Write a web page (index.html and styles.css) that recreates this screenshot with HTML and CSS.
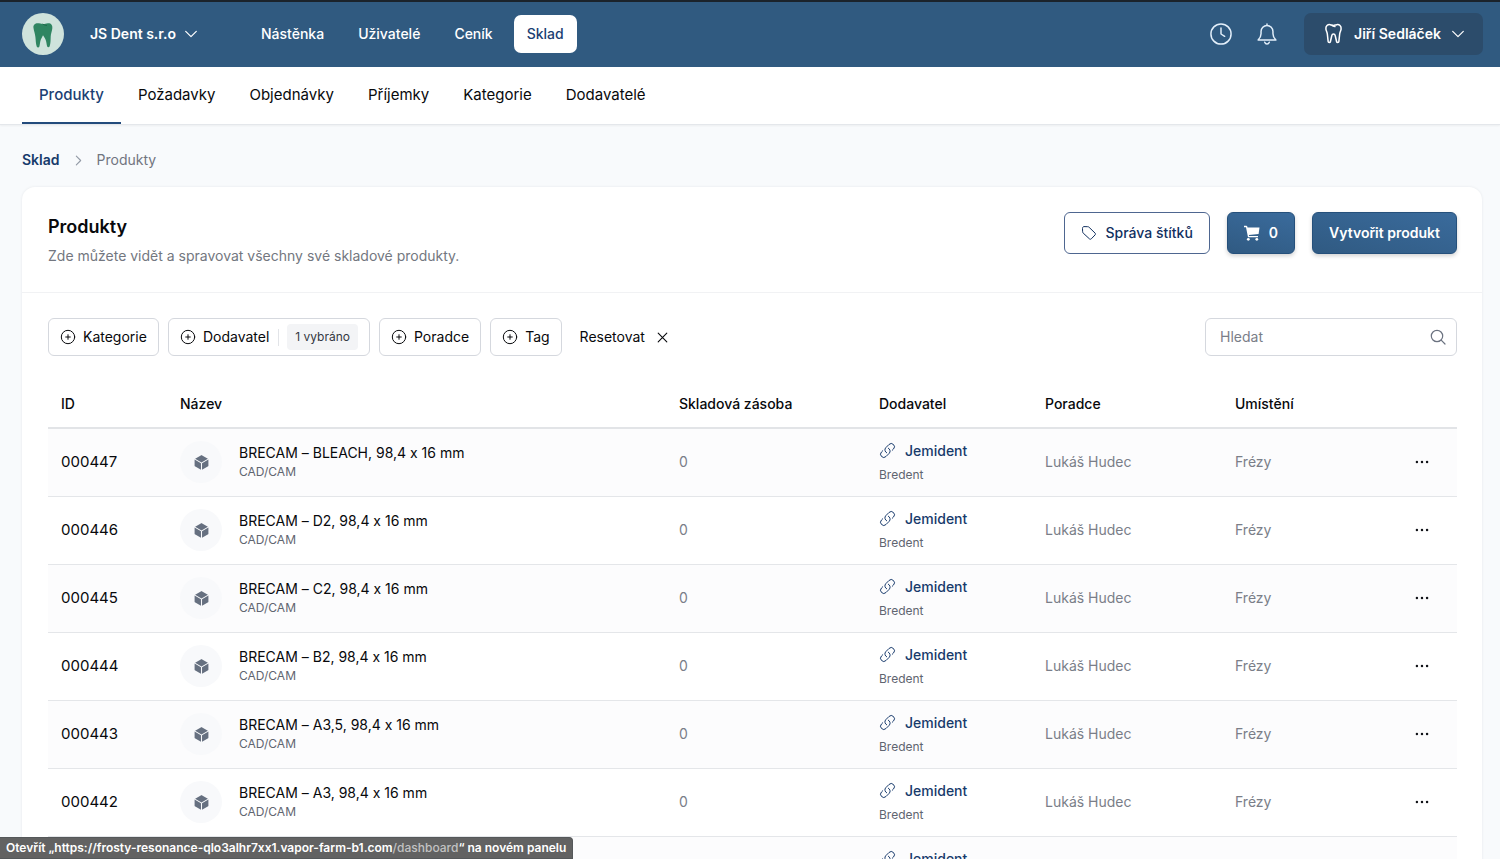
FILE: index.html
```html
<!DOCTYPE html>
<html lang="cs">
<head>
<meta charset="utf-8">
<meta name="viewport" content="width=device-width, initial-scale=1">
<title>Produkty – Sklad</title>
<link rel="stylesheet" href="styles.css">
</head>
<body>
<svg class="sprite" aria-hidden="true">
  <symbol id="chevron-down" viewBox="0 0 12 12"><path d="M.7 3.300 6 8.600l5.300-5.300"/></symbol>
  <symbol id="chevron-right" viewBox="0 0 12 12"><path d="M4 2l4 4-4 4"/></symbol>
  <symbol id="plus-circle" viewBox="0 0 16 16"><circle cx="8" cy="8" r="6.700"/><path d="M8 5.700v4.600M5.700 8h4.600"/></symbol>
  <symbol id="cross" viewBox="0 0 12 12"><path d="M1.300 1.300l9.400 9.400M10.700 1.300l-9.400 9.400"/></symbol>
  <symbol id="search" viewBox="0 0 16 16"><circle cx="7" cy="7" r="5.700"/><path d="M11.200 11.200l3.800 3.800"/></symbol>
  <symbol id="cube" viewBox="0 0 24 24"><path d="M12.378 1.602a.75.75 0 0 0-.756 0L3 6.632l9 5.250 9-5.250-8.622-5.030ZM21.750 7.930l-9 5.250v9l8.628-5.032a.75.75 0 0 0 .372-.648V7.930ZM11.250 22.180v-9l-9-5.250v8.570a.75.75 0 0 0 .372.648l8.628 5.032Z"/></symbol>
  <symbol id="link" viewBox="0 0 24 24"><path d="M13.190 8.688a4.500 4.500 0 0 1 1.242 7.244l-4.500 4.500a4.500 4.500 0 0 1-6.364-6.364l1.757-1.757m13.350-.622 1.757-1.757a4.500 4.500 0 0 0-6.364-6.364l-4.500 4.500a4.500 4.500 0 0 0 1.242 7.244"/></symbol>
  <symbol id="dots" viewBox="0 0 16 16"><circle cx="2.200" cy="8" r="1.400"/><circle cx="8" cy="8" r="1.400"/><circle cx="13.800" cy="8" r="1.400"/></symbol>
</svg>

<div class="app">
  <header class="topbar">
    <span class="logo">
      <svg viewBox="0 0 42 42" aria-hidden="true"><path d="M11.500 15c-.7-3.800 2.500-5.400 5.500-4.700 2 .4 3 .9 4.300.9 1.400 0 2.600-.8 4.700-.9 3.200-.1 4.700 2 4.300 5.200-.3 3-1.500 5-1.600 8.300-.1 3.600-.1 6.600-1 9.500-.4 1.300-2.300 1.300-2.600 0-.6-2.700-.7-4.600-1.600-6.800-.8-2-1.600-2.800-2.500-4.200-.7 1.700-2 3.400-2.600 5.800-.5 2-.5 3.600-1 5.400-.4 1.300-2.300 1.200-2.700 0-.9-3-.9-6.300-1.300-9.600-.4-3.300-1.500-6-1.900-8.900Z"/><path class="logo-line" d="M20.500 11c1.500.9 3 1.400 4.500 1.500"/></svg>
    </span>
    <button class="company" type="button">JS Dent s.r.o <svg class="icon chevron"><use href="#chevron-down"/></svg></button>
    <nav class="main-nav" aria-label="Hlavní">
      <a href="#">Nástěnka</a>
      <a href="#">Uživatelé</a>
      <a href="#">Ceník</a>
      <a href="#" class="current">Sklad</a>
    </nav>
    <div class="top-actions">
      <button class="icon-button" type="button" aria-label="Historie"><svg class="icon" viewBox="0 0 24 24"><circle cx="12" cy="12" r="11"/><path d="M12 5.500V12l4 2.500"/></svg></button>
      <button class="icon-button" type="button" aria-label="Oznámení"><svg class="icon" viewBox="0 0 24 24"><path d="M12 1v1.700M2.300 18.500c1.900-1.800 3.200-4 3.200-6.700V9.200a6.500 6.500 0 0 1 13 0v2.600c0 2.700 1.300 4.900 3.200 6.700ZM9.500 21c.5 1.300 1.400 1.900 2.500 1.900s2-.6 2.500-1.900"/></svg></button>
      <button class="user" type="button">
        <svg class="icon tooth" viewBox="0 0 20 22"><path d="M2 6.300C1.600 3.100 3.900 1.300 6.600 1.700c1.300.2 2.200.8 3.400.8s2.100-.6 3.400-.8c2.700-.4 5 1.400 4.600 4.600-.2 2-1.300 3.300-1.500 5.200l-.9 8.200c-.1 1-2.100 1-2.300 0l-1.500-6.500c-.2-1-.9-1.600-1.800-1.600s-1.600.6-1.800 1.600l-1.500 6.500c-.2 1-2.200 1-2.300 0l-.9-8.200C3.300 9.600 2.200 8.300 2 6.300ZM8 2.100c1 .8 2 1.300 3.500 1.600"/></svg>
        Jiří Sedláček
        <svg class="icon chevron"><use href="#chevron-down"/></svg>
      </button>
    </div>
  </header>

  <nav class="sub-nav" aria-label="Sklad">
    <a href="#" class="current">Produkty</a>
    <a href="#">Požadavky</a>
    <a href="#">Objednávky</a>
    <a href="#">Příjemky</a>
    <a href="#">Kategorie</a>
    <a href="#">Dodavatelé</a>
  </nav>

  <main class="content">
    <nav class="breadcrumb" aria-label="Drobečková navigace">
      <a href="#">Sklad</a>
      <svg class="icon"><use href="#chevron-right"/></svg>
      <span>Produkty</span>
    </nav>

    <section class="card">
      <div class="card-head">
        <div>
          <h1>Produkty</h1>
          <p>Zde můžete vidět a spravovat všechny své skladové produkty.</p>
        </div>
        <div class="card-actions">
          <button class="button outline" type="button"><svg class="icon" viewBox="0 0 16 16"><path d="M1.500 3.200c0-.9.600-1.600 1.500-1.600l3.700.1c.6 0 1 .2 1.400.6l5.900 5.700c.6.600.6 1.300.1 1.900l-3.800 3.900c-.6.600-1.300.6-1.900 0L2.200 8.100c-.4-.4-.6-.8-.6-1.400Z"/></svg>Správa štítků</button>
          <button class="button primary" type="button" aria-label="Košík: 0"><svg class="icon solid" viewBox="0 0 16 16"><path d="M0 .8h2.400c.5 0 .8.3.9.700l.2.900H15.500l-.9 6.700-9.700.9.200 1H14v1.300H4.700a.8.8 0 0 1-.8-.6L2 2.200H0Z"/><circle cx="4.300" cy="14.300" r="1.400"/><circle cx="12.800" cy="14.300" r="1.400"/></svg>0</button>
          <button class="button primary" type="button">Vytvořit produkt</button>
        </div>
      </div>

      <div class="filters">
        <button class="filter" type="button"><svg class="icon"><use href="#plus-circle"/></svg>Kategorie</button>
        <button class="filter" type="button"><svg class="icon"><use href="#plus-circle"/></svg>Dodavatel<span class="divider"></span><span class="chip">1 vybráno</span></button>
        <button class="filter" type="button"><svg class="icon"><use href="#plus-circle"/></svg>Poradce</button>
        <button class="filter" type="button"><svg class="icon"><use href="#plus-circle"/></svg>Tag</button>
        <button class="reset" type="button">Resetovat<svg class="icon"><use href="#cross"/></svg></button>
        <label class="search">
          <input type="search" placeholder="Hledat" aria-label="Hledat">
          <svg class="icon"><use href="#search"/></svg>
        </label>
      </div>

      <table class="products">
        <colgroup><col class="col-id"><col><col class="col-stock"><col class="col-supplier"><col class="col-advisor"><col class="col-place"><col class="col-menu"></colgroup>
        <thead>
          <tr><th>ID</th><th>Název</th><th>Skladová zásoba</th><th>Dodavatel</th><th>Poradce</th><th>Umístění</th><th></th></tr>
        </thead>
        <tbody>
          <tr>
            <td class="number">000447</td>
            <td><div class="product"><span class="thumb"><svg><use href="#cube"/></svg></span><div>BRECAM – BLEACH, 98,4 x 16 mm<small>CAD/CAM</small></div></div></td>
            <td class="muted">0</td>
            <td><a class="supplier" href="#"><svg class="icon"><use href="#link"/></svg>Jemident</a><small>Bredent</small></td>
            <td class="muted">Lukáš Hudec</td><td class="muted">Frézy</td>
            <td><button class="menu" type="button" aria-label="Další akce"><svg><use href="#dots"/></svg></button></td>
          </tr>
          <tr>
            <td class="number">000446</td>
            <td><div class="product"><span class="thumb"><svg><use href="#cube"/></svg></span><div>BRECAM – D2, 98,4 x 16 mm<small>CAD/CAM</small></div></div></td>
            <td class="muted">0</td>
            <td><a class="supplier" href="#"><svg class="icon"><use href="#link"/></svg>Jemident</a><small>Bredent</small></td>
            <td class="muted">Lukáš Hudec</td><td class="muted">Frézy</td>
            <td><button class="menu" type="button" aria-label="Další akce"><svg><use href="#dots"/></svg></button></td>
          </tr>
          <tr>
            <td class="number">000445</td>
            <td><div class="product"><span class="thumb"><svg><use href="#cube"/></svg></span><div>BRECAM – C2, 98,4 x 16 mm<small>CAD/CAM</small></div></div></td>
            <td class="muted">0</td>
            <td><a class="supplier" href="#"><svg class="icon"><use href="#link"/></svg>Jemident</a><small>Bredent</small></td>
            <td class="muted">Lukáš Hudec</td><td class="muted">Frézy</td>
            <td><button class="menu" type="button" aria-label="Další akce"><svg><use href="#dots"/></svg></button></td>
          </tr>
          <tr>
            <td class="number">000444</td>
            <td><div class="product"><span class="thumb"><svg><use href="#cube"/></svg></span><div>BRECAM – B2, 98,4 x 16 mm<small>CAD/CAM</small></div></div></td>
            <td class="muted">0</td>
            <td><a class="supplier" href="#"><svg class="icon"><use href="#link"/></svg>Jemident</a><small>Bredent</small></td>
            <td class="muted">Lukáš Hudec</td><td class="muted">Frézy</td>
            <td><button class="menu" type="button" aria-label="Další akce"><svg><use href="#dots"/></svg></button></td>
          </tr>
          <tr>
            <td class="number">000443</td>
            <td><div class="product"><span class="thumb"><svg><use href="#cube"/></svg></span><div>BRECAM – A3,5, 98,4 x 16 mm<small>CAD/CAM</small></div></div></td>
            <td class="muted">0</td>
            <td><a class="supplier" href="#"><svg class="icon"><use href="#link"/></svg>Jemident</a><small>Bredent</small></td>
            <td class="muted">Lukáš Hudec</td><td class="muted">Frézy</td>
            <td><button class="menu" type="button" aria-label="Další akce"><svg><use href="#dots"/></svg></button></td>
          </tr>
          <tr>
            <td class="number">000442</td>
            <td><div class="product"><span class="thumb"><svg><use href="#cube"/></svg></span><div>BRECAM – A3, 98,4 x 16 mm<small>CAD/CAM</small></div></div></td>
            <td class="muted">0</td>
            <td><a class="supplier" href="#"><svg class="icon"><use href="#link"/></svg>Jemident</a><small>Bredent</small></td>
            <td class="muted">Lukáš Hudec</td><td class="muted">Frézy</td>
            <td><button class="menu" type="button" aria-label="Další akce"><svg><use href="#dots"/></svg></button></td>
          </tr>
          <tr>
            <td class="number">000441</td>
            <td><div class="product"><span class="thumb"><svg><use href="#cube"/></svg></span><div>BRECAM – A2, 98,4 x 16 mm<small>CAD/CAM</small></div></div></td>
            <td class="muted">0</td>
            <td><a class="supplier" href="#"><svg class="icon"><use href="#link"/></svg>Jemident</a><small>Bredent</small></td>
            <td class="muted">Lukáš Hudec</td><td class="muted">Frézy</td>
            <td><button class="menu" type="button" aria-label="Další akce"><svg><use href="#dots"/></svg></button></td>
          </tr>
        </tbody>
      </table>
    </section>
  </main>
</div>
<div class="status">Otevřít „https://frosty-resonance-qlo3alhr7xx1.vapor-farm-b1.com<span>/dashboard</span>“ na novém panelu</div>
</body>
</html>
```

FILE: styles.css
```css
*, *::before, *::after { box-sizing: border-box; }

body {
  margin: 0;
  background: #f8fafc;
  color: #08090c;
  font: 400 14px/20px Inter, "Noto Sans", sans-serif;
  font-feature-settings: "calt" 0;
}

a { color: inherit; text-decoration: none; }
button { margin: 0; padding: 0; border: 0; background: none; color: inherit; font: inherit; font-feature-settings: inherit; cursor: pointer; }
.sprite { display: none; }

.app { height: 100vh; overflow-x: hidden; overflow-y: auto; scrollbar-width: none; }

.icon {
  flex: none;
  width: 16px;
  height: 16px;
  fill: none;
  stroke: currentColor;
  stroke-width: 1.2;
  stroke-linecap: round;
  stroke-linejoin: round;
}
.icon.solid { fill: currentColor; stroke: none; }
.icon.chevron { width: 12px; height: 12px; }

.topbar {
  display: flex;
  align-items: center;
  height: 67px;
  padding: 0 17px 0 22px;
  background: #305a80;
  box-shadow: inset 0 2px #1b232b;
  color: #fff;
  font-weight: 600;
}
.logo { width: 42px; height: 42px; border-radius: 50%; background: #cfe3dc; }
.logo svg { display: block; width: 42px; height: 42px; fill: #2f8561; }
.logo .logo-line { fill: none; stroke: #1f6a4b; stroke-width: 1; }
.company { display: flex; align-items: center; gap: 9px; margin-left: 26px; }
.main-nav { display: flex; margin-left: 51px; gap: 8px; font-weight: 500; }
.main-nav a { padding: 9px 13px; border-radius: 7px; }
.main-nav .current { background: #fff; color: #1c3f73; }
.top-actions { display: flex; align-items: center; gap: 24px; margin-left: auto; }
.icon-button { display: flex; color: #e3effa; }
.icon-button .icon { width: 22px; height: 22px; stroke-width: 1.6; }
.user {
  display: flex;
  align-items: center;
  gap: 11px;
  height: 42px;
  margin-left: 2px;
  padding: 0 19px 0 20px;
  border-radius: 7px;
  background: #2c4c6b;
}
.icon.tooth { width: 19px; height: 21px; stroke-width: 1.6; }

.sub-nav {
  display: flex;
  height: 58px;
  padding: 0 22px;
  border-bottom: 1px solid #e4e7eb;
  background: #fff;
  box-shadow: 0 1px 2px rgb(0 0 0 / 5%);
  font-size: 15px;
}
.sub-nav a { display: flex; align-items: center; padding: 0 17px; border-bottom: 2px solid transparent; }
.sub-nav .current { border-color: #234b7c; color: #1c3f73; font-weight: 500; }

.content { padding: 25px 18px 0 22px; }
.breadcrumb { display: flex; align-items: center; gap: 12px; color: #71757f; }
.breadcrumb a { color: #173a6b; font-weight: 600; }
.breadcrumb .icon { width: 13px; height: 13px; stroke-width: 1; color: #9299a5; }

.card {
  margin-top: 17px;
  border-radius: 13px;
  background: #fff;
  box-shadow: 0 0 3px rgb(15 23 42 / 8%);
}
.card-head {
  display: flex;
  justify-content: space-between;
  height: 106px;
  padding: 25px 25px 0 26px;
  border-bottom: 1px solid #f1f2f4;
}
h1 { margin: 3px 0 7px; font-size: 18px; line-height: 24px; font-weight: 600; }
p { margin: 0; color: #737780; }
.card-actions { display: flex; align-items: flex-start; gap: 17px; }
.button {
  display: flex;
  align-items: center;
  gap: 9px;
  height: 42px;
  padding: 0 16px;
  border: 1px solid #25507b;
  border-radius: 6px;
  font-weight: 600;
}
.button.outline { border-color: #4e6690; color: #12305f; font-weight: 500; }
.button.outline .icon { stroke-width: 1; }
.button.primary { background: linear-gradient(15deg, #305a82, #3a6b9c); color: #fff; box-shadow: 0 2px 4px rgb(0 0 0 / 18%); }

.filters { display: flex; align-items: center; gap: 9px; padding: 25px 25px 0 26px; }
.filter {
  display: flex;
  align-items: center;
  gap: 7px;
  height: 38px;
  padding: 0 11px;
  border: 1px solid #d5d8de;
  border-radius: 6px;
}
.filter .icon { stroke-width: 1; }
.divider { width: 1px; height: 17px; margin: 0 1px 0 2px; background: #e2e4e8; }
.chip { padding: 3px 8px; border-radius: 4px; background: #f3f4f6; color: #333842; font-size: 12px; }
.reset { display: flex; align-items: center; gap: 12px; margin-left: 9px; }
.reset .icon { width: 11px; height: 11px; }
.search {
  display: flex;
  align-items: center;
  width: 252px;
  height: 38px;
  margin-left: auto;
  padding: 0 10px 0 14px;
  border: 1px solid #d5d8de;
  border-radius: 6px;
  color: #6b7280;
}
.search input { flex: 1; min-width: 0; padding: 0; border: 0; outline: 0; background: none; color: #333842; font: inherit; }
.search input::placeholder { color: #7a7e88; opacity: 1; }

.products { width: calc(100% - 51px); margin: 23px 25px 26px 26px; border-collapse: collapse; table-layout: fixed; }
.col-id { width: 119px; }
.col-stock { width: 200px; }
.col-supplier { width: 166px; }
.col-advisor { width: 190px; }
.col-place { width: 180px; }
.col-menu { width: 55px; }
th { height: 49px; padding: 2px 13px 0; border-bottom: 2px solid #e2e4e7; text-align: left; font-weight: 500; }
td { height: 68px; padding: 0 13px; border-bottom: 1px solid #e4e6e9; }
tbody tr:nth-child(odd) { background: #fcfcfd; }
.number { font-size: 15px; }
.muted { color: #7a7e88; }
small { display: block; color: #5f6570; font-size: 12px; line-height: 18px; }
.product { display: flex; align-items: center; gap: 17px; }
.thumb { display: flex; align-items: center; justify-content: center; width: 42px; height: 42px; border-radius: 50%; background: #f8f9fb; }
.thumb svg { width: 17px; height: 17px; fill: #667080; }
.supplier { display: flex; align-items: center; gap: 9px; margin-bottom: 5px; color: #173a6b; font-weight: 500; }
.supplier .icon { width: 17px; height: 17px; stroke-width: 1.4; }
.menu { display: flex; }
.menu svg { width: 14px; height: 14px; fill: #111318; }

.status {
  position: fixed;
  left: 0;
  bottom: 0;
  padding: 0 6px;
  border: 1px solid #55585a;
  border-left: 0;
  border-radius: 0 4px 0 0;
  background: #626262;
  color: #fff;
  font-size: 12px;
  font-weight: 600;
  line-height: 20px;
  white-space: nowrap;
}
.status span { color: #c2c2c2; font-weight: 500; }
```
